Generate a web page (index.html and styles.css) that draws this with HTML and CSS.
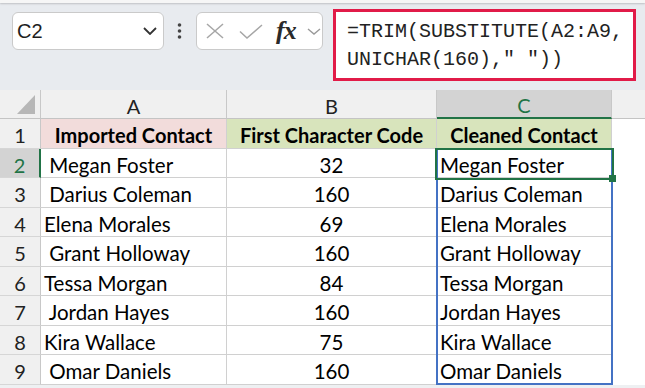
FILE: index.html
```html
<!DOCTYPE html>
<html>
<head>
<meta charset="utf-8">
<link rel="stylesheet" href="styles.css">
</head>
<body>
<div class="app">
  <div class="topline"></div>
  <div class="fbar">
    <div class="namebox">
      <span class="nb-text">C2</span>
      <svg class="nb-chev" width="14" height="8" viewBox="0 0 14 8"><polyline points="1,1 7,7 13,1" fill="none" stroke="#333" stroke-width="1.8"/></svg>
    </div>
    <svg class="vdots" width="5" height="16" viewBox="0 0 5 16"><circle cx="2.5" cy="2" r="1.8" fill="#444"/><circle cx="2.5" cy="8" r="1.8" fill="#444"/><circle cx="2.5" cy="14" r="1.8" fill="#444"/></svg>
    <div class="fbtns">
      <svg class="ic-x" width="18" height="16" viewBox="0 0 18 16"><line x1="1" y1="1" x2="17" y2="15" stroke="#a6a6a6" stroke-width="1.5"/><line x1="17" y1="1" x2="1" y2="15" stroke="#a6a6a6" stroke-width="1.5"/></svg>
      <svg class="ic-check" width="24" height="15" viewBox="0 0 24 15"><polyline points="1,7.5 8,14 23,1" fill="none" stroke="#a6a6a6" stroke-width="1.5"/></svg>
      <span class="ic-fx">fx</span>
      <svg class="ic-chev" width="14" height="7" viewBox="0 0 14 7"><polyline points="1,1 7,6 13,1" fill="none" stroke="#9a9a9a" stroke-width="1.4"/></svg>
    </div>
    <div class="finput">
      <div class="ftext">=TRIM(SUBSTITUTE(A2:A9,<br>UNICHAR(160)," "))</div>
    </div>
  </div>

  <div class="sheet">
    <div class="cell hdr corner"><span class="tri"></span></div>
    <div class="cell hdr ch">A</div>
    <div class="cell hdr ch">B</div>
    <div class="cell hdr ch sel-col">C</div>
    <div class="cell hdr extra-h"></div>

    <div class="cell hdr rh">1</div>
    <div class="cell h-pink">Imported Contact</div>
    <div class="cell h-green">First Character Code</div>
    <div class="cell h-green">Cleaned Contact</div>
    <div class="cell extra"></div>

    <div class="cell hdr rh sel-row">2</div>
    <div class="cell txt">&nbsp;Megan Foster</div>
    <div class="cell num">32</div>
    <div class="cell txt">Megan Foster</div>
    <div class="cell extra"></div>

    <div class="cell hdr rh">3</div>
    <div class="cell txt">&nbsp;Darius Coleman</div>
    <div class="cell num">160</div>
    <div class="cell txt">Darius Coleman</div>
    <div class="cell extra"></div>

    <div class="cell hdr rh">4</div>
    <div class="cell txt">Elena Morales</div>
    <div class="cell num">69</div>
    <div class="cell txt">Elena Morales</div>
    <div class="cell extra"></div>

    <div class="cell hdr rh">5</div>
    <div class="cell txt">&nbsp;Grant Holloway</div>
    <div class="cell num">160</div>
    <div class="cell txt">Grant Holloway</div>
    <div class="cell extra"></div>

    <div class="cell hdr rh">6</div>
    <div class="cell txt">Tessa Morgan</div>
    <div class="cell num">84</div>
    <div class="cell txt">Tessa Morgan</div>
    <div class="cell extra"></div>

    <div class="cell hdr rh">7</div>
    <div class="cell txt">&nbsp;Jordan Hayes</div>
    <div class="cell num">160</div>
    <div class="cell txt">Jordan Hayes</div>
    <div class="cell extra"></div>

    <div class="cell hdr rh">8</div>
    <div class="cell txt">Kira Wallace</div>
    <div class="cell num">75</div>
    <div class="cell txt">Kira Wallace</div>
    <div class="cell extra"></div>

    <div class="cell hdr rh">9</div>
    <div class="cell txt">&nbsp;Omar Daniels</div>
    <div class="cell num">160</div>
    <div class="cell txt">Omar Daniels</div>
    <div class="cell extra"></div>

    <div class="range-blue"></div>
    <div class="sel-green"><span class="handle"></span></div>
  </div>
</div>
</body>
</html>
```

FILE: styles.css
```css
* { box-sizing: border-box; }
html, body { margin: 0; padding: 0; }
body { width: 645px; height: 388px; overflow: hidden; background: #eef0f2; }

.app { width: 645px; height: 388px; font-family: Lato, "Open Sans", sans-serif; }

.topline { height: 3px; background: #f6f6f6; box-shadow: 0 1px 2px rgba(0,0,0,0.18); position: relative; }

.fbar {
  height: 87px;
  background: #e8ebef;
  display: flex;
  align-items: flex-start;
}

.namebox {
  margin: 9px 0 0 12px;
  width: 152px;
  height: 38px;
  border: 1px solid #cacaca;
  border-radius: 6px;
  background: #fff;
  display: flex;
  align-items: center;
  justify-content: space-between;
  padding: 0 6px 0 4px;
}
.nb-text { font-family: "Liberation Sans", Arial, sans-serif; font-size: 20px; color: #1e1e1e; }

.vdots { margin: 20px 0 0 13px; display: block; }

.fbtns {
  margin: 9px 0 0 14px;
  width: 127px;
  height: 38px;
  border: 1px solid #cacaca;
  border-radius: 6px;
  background: #fff;
  display: flex;
  align-items: center;
  padding-left: 9px;
}
.ic-x { display: block; }
.ic-check { display: block; margin-left: 15px; }
.ic-fx {
  display: block;
  margin-left: 13px;
  width: 22px;
  font-family: "Liberation Serif", "DejaVu Serif", serif;
  font-style: italic;
  font-weight: 700;
  font-size: 26px;
  line-height: 22px;
  color: #2a2a2a;
  letter-spacing: -1px;
}
.ic-chev { display: block; margin-left: 9px; }

.finput {
  margin: 6px 0 0 10px;
  width: 303px;
  height: 72px;
  border: 3px solid #e11b48;
  background: #fff;
  padding: 6px 0 0 11px;
}
.ftext {
  font-family: "Liberation Mono", "DejaVu Sans Mono", monospace;
  font-size: 20px;
  line-height: 28px;
  color: #222;
  white-space: nowrap;
}

.sheet {
  position: relative;
  display: grid;
  grid-template-columns: 41px 186px 210px 175px 1fr;
  grid-template-rows: 29px 30px 29px 30px 29px 30px 29px 30px 29px 30px;
  background: #fff;
}

.cell {
  border-right: 1px solid #d0d0d0;
  border-bottom: 1px solid #d0d0d0;
  display: flex;
  align-items: center;
  padding-top: 3px;
  font-size: 20.5px;
  color: #000;
  white-space: pre;
  overflow: hidden;
}

.hdr {
  background: #f0f0f0;
  border-right-color: #c8c8c8;
  border-bottom-color: #c4c4c4;
  justify-content: center;
  color: #222;
}
.corner { position: relative; }
.tri {
  position: absolute;
  left: 17px;
  top: 5px;
  width: 0; height: 0;
  border-left: 18px solid transparent;
  border-bottom: 19px solid #b7b7b7;
}
.ch { font-size: 20px; }
.rh { font-size: 20px; border-bottom-color: #d6d6d6; }

.sel-col {
  background: #d3d3d3;
  color: #217346;
  border-bottom: 2px solid #217346;
}
.sel-row {
  background: #d3d3d3;
  color: #217346;
  border-right: 2px solid #217346;
}

.extra-h { border-right: none; }
.extra { border-right: none; border-bottom: none; background: #fff; }

.h-pink, .h-green { justify-content: center; font-weight: 700; font-size: 20px; }
.h-pink { background: #f2dcdb; }
.h-green { background: #d8e4bc; }

.txt { padding-left: 3px; }
.num { justify-content: center; }

.range-blue {
  position: absolute;
  left: 436px;
  top: 58px;
  width: 177px;
  height: 237px;
  border: 2px solid #4472c4;
}
.sel-green {
  position: absolute;
  left: 435px;
  top: 58px;
  width: 179px;
  height: 32px;
  border: 2px solid #217346;
}
.handle {
  position: absolute;
  right: -4px;
  bottom: -4px;
  width: 7px;
  height: 7px;
  background: #217346;
}
```
